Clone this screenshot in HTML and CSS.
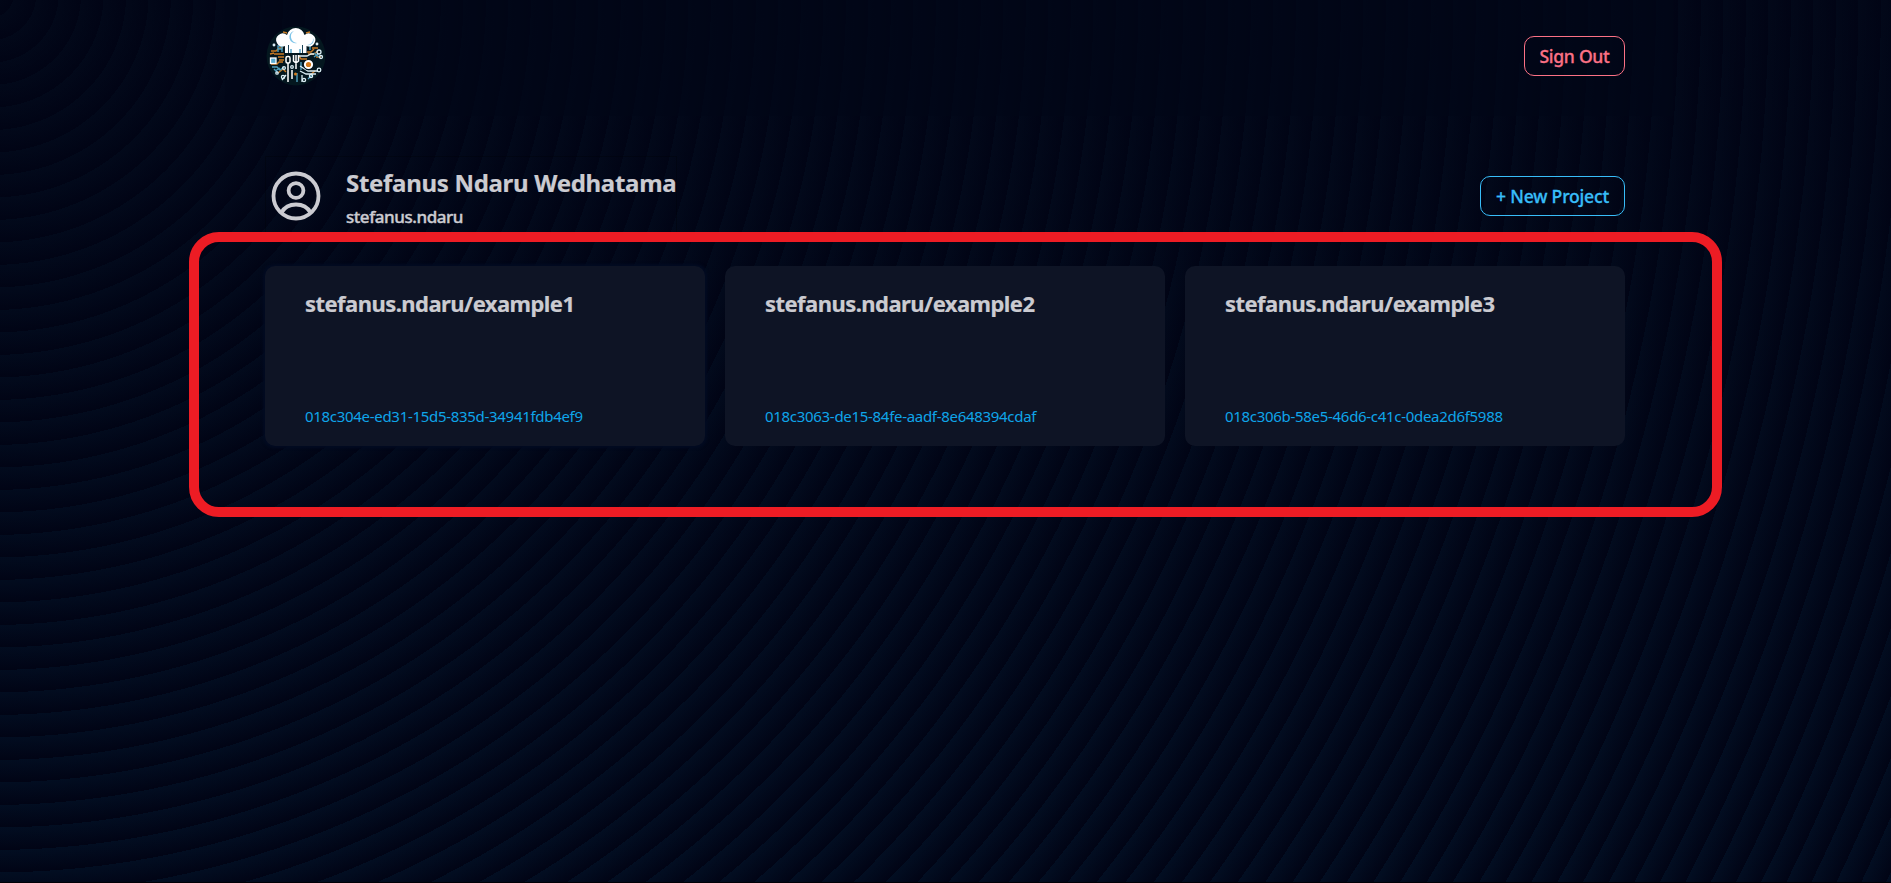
FILE: index.html
```html
<!DOCTYPE html>
<html lang="en">
<head>
<meta charset="utf-8">
<title>Projects</title>
<link rel="stylesheet" href="styles.css">
</head>
<body>
<div class="page">
  <header class="topbar">
    <svg class="logo" viewBox="0 0 60 60" aria-label="Chef logo">
      <circle cx="30" cy="30" r="29.500" fill="#04171f"/>
      <g fill="none" stroke="#c87a24" stroke-width="1.400">
        <path d="M5 25h5l3-3h4M5 38h6l2-2h4M8 28h10M12 31h6M13 34h5M4 28l4-1M12 47l5-4 3 3M41 33h-6l-2-3M52 25l-4 3h-6M44 49l5-4M41 26h4l3-3"/>
        <path d="M17 6l4 1M40 7l4-1M46 22h6M50 31h5"/>
      </g>
      <g fill="none" stroke="#4f9fbd" stroke-width="1.400">
        <path d="M12 26v-6h4v6M12 23h4M6 41h5l3 3 4-3M9 45l5-3M8 43l4 4M44 19v5M48 27l5 4M48 31l4-3M35 36v8M42 53l4-4M31 47v9"/>
      </g>
      <g fill="none" stroke="#dceef5" stroke-width="1.300">
        <path d="M33 30h8l4-2h3M34 40l8 5h10M34 45l6 3h10M36 49v7M16 54l4-5"/>
        <circle cx="53" cy="26" r="2"/><circle cx="55" cy="31" r="1.500"/><circle cx="53" cy="44" r="1.800"/>
        <circle cx="45" cy="50" r="1.600"/><circle cx="38" cy="54" r="1.600"/><circle cx="17" cy="51" r="1.600"/>
        <circle cx="18" cy="42" r="1.400"/><circle cx="11" cy="47" r="1.200"/><circle cx="26" cy="41" r="1.300"/>
        <circle cx="8" cy="19" r=".800"/><circle cx="51" cy="18" r=".800"/>
      </g>
      <rect x="4.500" y="32" width="5.500" height="5.500" fill="#5aaad0" stroke="#fff" stroke-width="1.300"/>
      <circle cx="42.500" cy="39" r="5.200" fill="#04171f"/>
      <circle cx="42.500" cy="38.500" r="3.600" fill="#d47b1d" stroke="#fff" stroke-width="2"/>
      <circle cx="29.500" cy="48" r="1.500" fill="#d47b1d"/>
      <path fill="#fff" d="M19 27v-7a6.500 6.500 0 1 1 2-11 9 9 0 0 1 17.500 0 6.500 6.500 0 1 1 2 11v7z"/>
      <g fill="#7cc4e8"><path d="M14 10a5 5 0 0 0 3 9 5.500 5.500 0 0 1-5-4 5 5 0 0 1 2-5zM28 5a6 6 0 0 0 3 12 6.500 6.500 0 0 1-3-12zM47 12a5 5 0 0 1-6 7 6 6 0 0 0 6-7z"/></g>
      <path stroke="#1c4458" stroke-width="1" d="M22.500 19v8M36.500 19v8"/>
      <path stroke="#5aa5c8" stroke-width="1.500" d="M25 23v4M34 23v4"/>
      <g fill="none" stroke="#fff" stroke-width="1.500">
        <rect x="20" y="30.500" width="4" height="6.500" rx="1.500"/>
        <path d="M22 37v19M27.500 29v6q2.500 3 5 0v-6M30 29v14M26 44v9"/>
      </g>
    </svg>
    <button class="btn btn-danger">Sign Out</button>
  </header>
  <main class="content">
    <section class="profile-row">
      <div class="profile">
        <svg class="avatar" viewBox="0 0 60 60" fill="none" stroke="currentColor" stroke-width="3.800">
          <circle cx="30" cy="30" r="22.500"/>
          <circle cx="30" cy="24.500" r="7.400"/>
          <path d="M15.500 46.500c2.500-4.500 7.500-8 14.500-8s12 3.500 14.500 8"/>
        </svg>
        <div class="identity">
          <h1 class="name">Stefanus Ndaru Wedhatama</h1>
          <p class="username">stefanus.ndaru</p>
        </div>
      </div>
      <button class="btn btn-primary">+ New Project</button>
    </section>
    <section class="projects">
      <article class="card card-active"><h2 class="card-title">stefanus.ndaru/example1</h2><p class="card-id">018c304e-ed31-15d5-835d-34941fdb4ef9</p></article>
      <article class="card"><h2 class="card-title">stefanus.ndaru/example2</h2><p class="card-id">018c3063-de15-84fe-aadf-8e648394cdaf</p></article>
      <article class="card"><h2 class="card-title">stefanus.ndaru/example3</h2><p class="card-id">018c306b-58e5-46d6-c41c-0dea2d6f5988</p></article>
    </section>
  </main>
  <div class="highlight"></div>
</div>
</body>
</html>
```
FILE: styles.css
```css
* { box-sizing: border-box; }
body { margin: 0; background: #020617; }
h1, h2, p { margin: 0; }
.page {
  position: relative;
  width: 100%;
  height: 883px;
  overflow: hidden;
  border-bottom: 1px solid #000006;
  font-family: "Noto Sans", "Open Sans", sans-serif;
  color: #cbcbd1;
  background-image:
    repeating-radial-gradient(circle at -9px -5px, transparent 0, #010415 22.5px),
    linear-gradient(#020819, #020e22);
}
.topbar {
  display: flex;
  justify-content: space-between;
  align-items: flex-start;
  width: 1448px;
  height: 116px;
  margin-left: 225px;
  padding: 26px 48px 0 40px;
  background: rgba(2, 6, 23, 0.6);
}
.logo { width: 60px; height: 60px; margin-left: 1px; }
.btn {
  height: 40px;
  margin: 0;
  padding: 0;
  border: 1px solid currentColor;
  border-radius: 10px;
  background: transparent;
  font: 500 17.6px/36px "Noto Sans", sans-serif;
  -webkit-text-stroke: 0.3px currentColor;
  white-space: nowrap;
}
.btn-danger { width: 101px; margin-top: 10px; color: #fb7185; letter-spacing: -0.3px; }
.btn-primary { width: 145px; color: #38bdf8; letter-spacing: -0.2px; }
.content { width: 1360px; margin-left: 265px; padding-top: 40px; }
.profile-row { display: flex; justify-content: space-between; align-items: center; height: 80px; }
.profile {
  display: flex;
  gap: 20px;
  width: 412px;
  height: 80px;
  padding-top: 9px;
  border: 1px solid rgba(0, 2, 8, 0.35);
}
.avatar { width: 60px; height: 60px; flex: none; }
.identity { padding-top: 1px; white-space: nowrap; }
.name { font-size: 24px; line-height: 32px; font-weight: 700; letter-spacing: -0.3px; -webkit-text-stroke: 0.2px currentColor; }
.username {
  margin-top: 6px;
  font-size: 17px;
  line-height: 24px;
  font-weight: 500;
  letter-spacing: -0.45px;
  -webkit-text-stroke: 0.4px currentColor;
}
.projects { display: grid; grid-template-columns: repeat(3, 440px); gap: 20px; margin-top: 30px; }
.card {
  display: flex;
  flex-direction: column;
  justify-content: space-between;
  height: 180px;
  padding: 21px 40px 19px;
  border-radius: 10px;
  background: #0e1425;
  white-space: nowrap;
}
.card-active { box-shadow: 0 0 3px 2px #020b22; }
.card-title { font-size: 22px; line-height: 32px; font-weight: 700; letter-spacing: -0.55px; -webkit-text-stroke: 0.2px currentColor; }
.card-id { color: #0ea5e9; font-size: 15px; line-height: 22px; letter-spacing: -0.3px; }
.highlight {
  position: absolute;
  left: 189px;
  top: 232px;
  width: 1533px;
  height: 285px;
  border: 10px solid #ed1c24;
  border-radius: 30px;
}
```
